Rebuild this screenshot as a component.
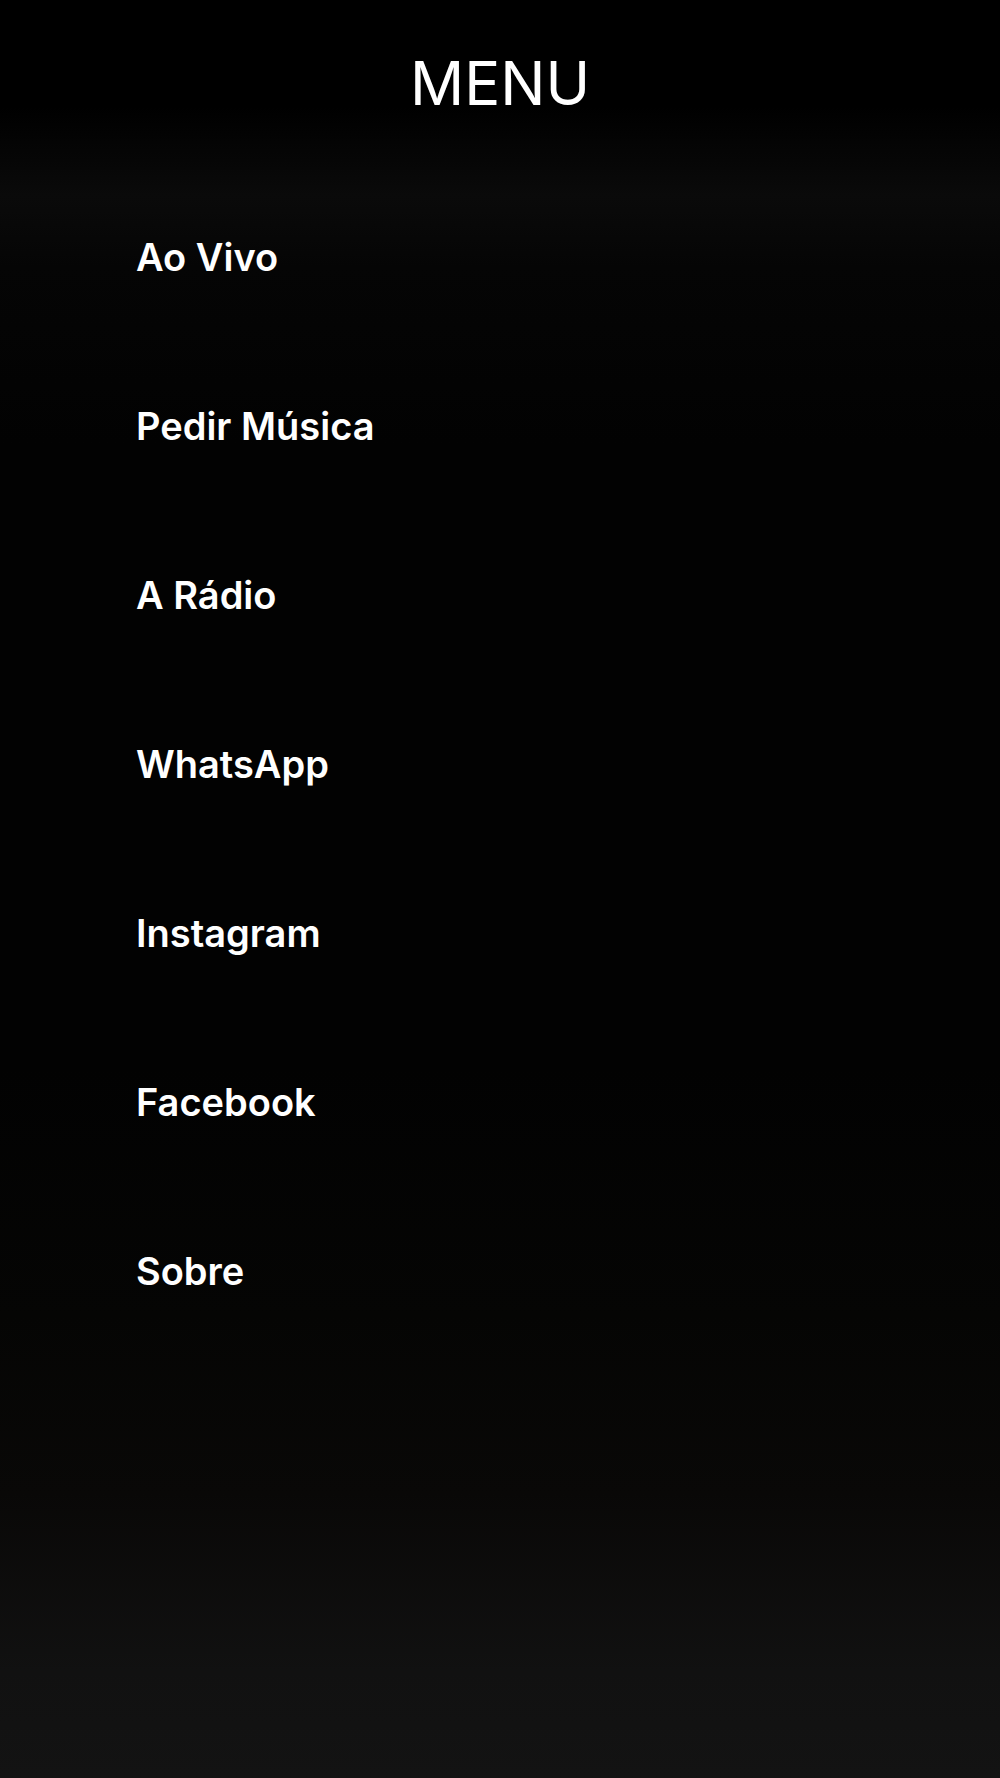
import React from "react";

const items = [
  "Ao Vivo",
  "Pedir Música",
  "A Rádio",
  "WhatsApp",
  "Instagram",
  "Facebook",
  "Sobre",
];

const App: React.FC = () => {
  return (
    <div className="min-h-[1778px] w-full text-white font-['Inter','Liberation_Sans',sans-serif] bg-[linear-gradient(to_bottom,#000_0%,#000_6%,#0a0a0a_11%,#050505_15%,#020202_25%,#020202_60%,#050504_74%,#090807_84%,#111111_94%,#131313_100%)]">
      {/* Header */}
      <header className="pt-[50px] text-center">
        <h1 className="text-[60px] leading-[66px] font-normal">MENU</h1>
      </header>

      {/* Menu items */}
      <nav className="pt-[118px] pl-[136px]">
        {items.map((item) => (
          <div
            key={item}
            className="h-[169px] text-[38px] leading-[46px] font-semibold"
          >
            {item}
          </div>
        ))}
      </nav>
    </div>
  );
};

export default App;
